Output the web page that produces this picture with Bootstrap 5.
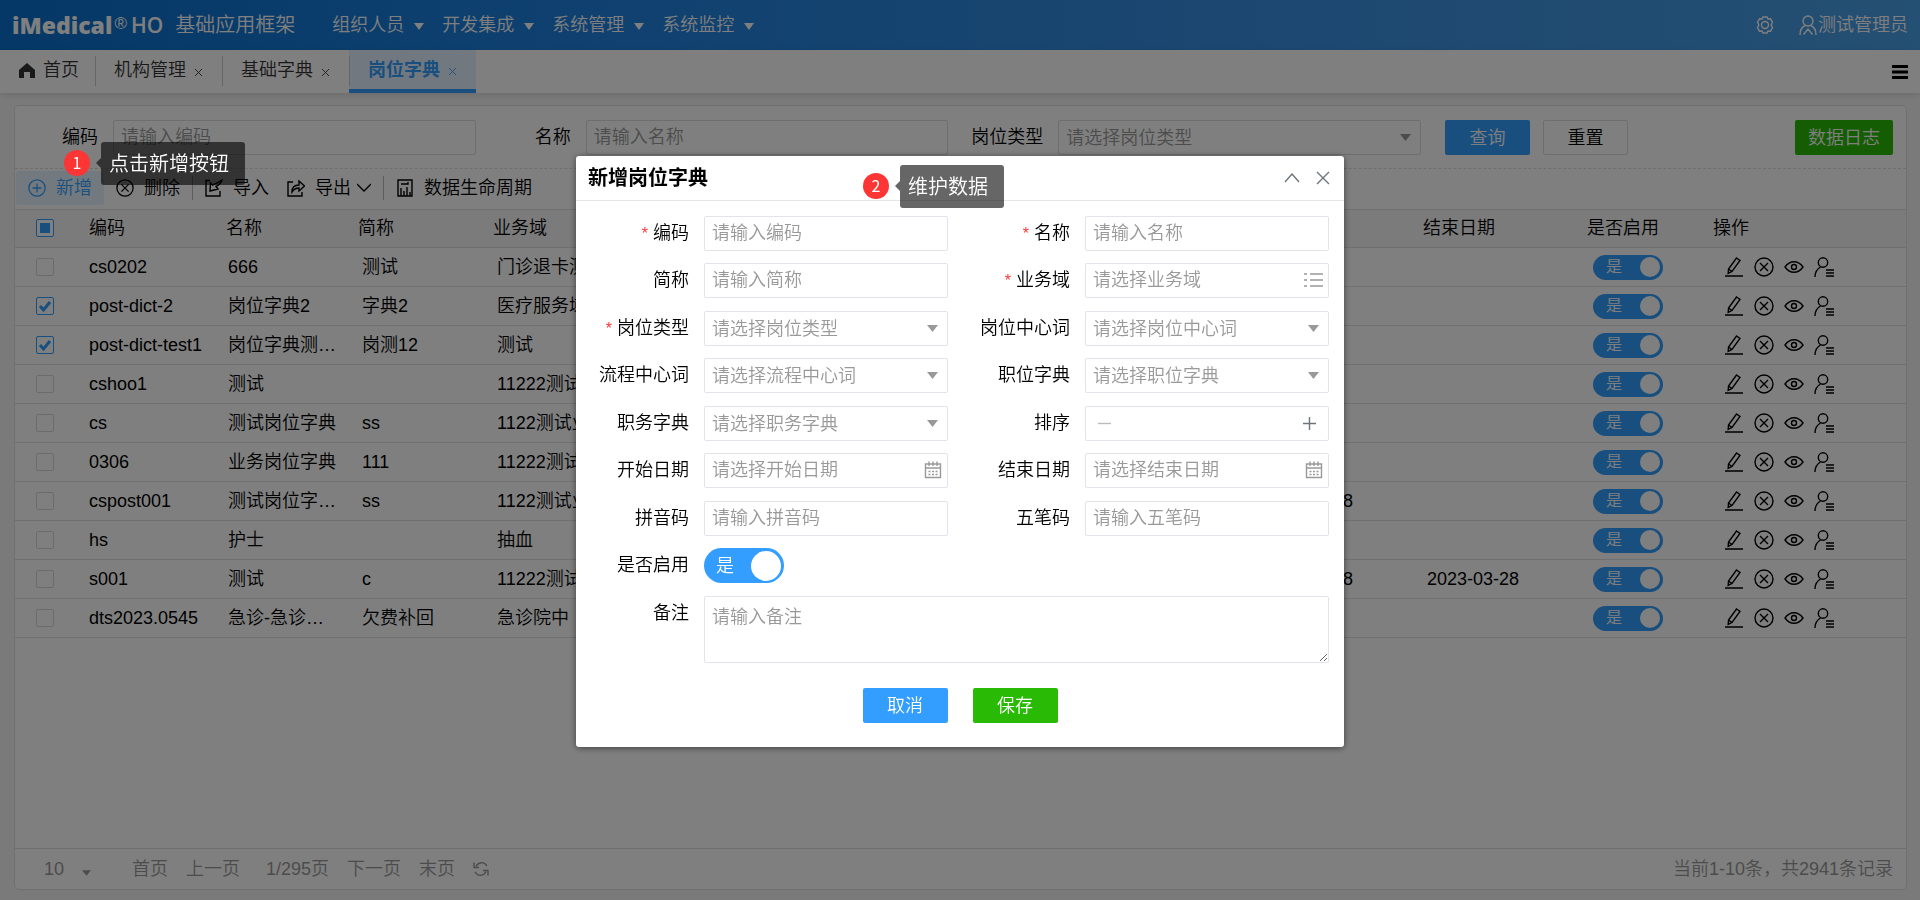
<!DOCTYPE html>
<html lang="zh-CN">
<head>
<meta charset="utf-8">
<meta name="viewport" content="width=device-width, initial-scale=1">
<title>基础应用框架 - 岗位字典</title>
<link href="https://cdn.jsdelivr.net/npm/bootstrap@5.3.0/dist/css/bootstrap.min.css" rel="stylesheet">
<style>
  :root { --blue: #339eff; --green: #28ba05; --line: #e0e0e0; --field: #e2e3eb; }
  body { font-family: "Liberation Sans", "Noto Sans CJK SC", sans-serif; font-size: 18px; font-weight: 350; line-height: 24px; color: #000; background: #f5f5f5; }
  svg { display: block; flex: none; fill: none; stroke: currentColor; stroke-width: 1.4; }
  a { color: inherit; text-decoration: none; }
  .ic { width: 20px; height: 20px; }
  .ic-sm { width: 18px; height: 18px; }

  .topbar { height: 50px; padding: 0 12px; color: #fff; background: linear-gradient(90deg, #0a70cc 0, #1b7fdf 25%, #3f93e2 75%, #49a0e6 100%); }
  .logo { font: 800 23px/24px "Open Sans", sans-serif; }
  .logo sup { font: 400 17px/12px "Liberation Sans", sans-serif; top: -5px; margin-left: 2px; }
  .logo-ho { font: 600 21px/24px "Open Sans", sans-serif; }
  .brand { font-size: 20px; }
  .topnav { gap: 38px; margin-left: 37px; }
  .menu-link { display: flex; align-items: center; width: 72px; white-space: nowrap; }
  .menu-link::after { content: ""; border: 5px solid transparent; border-top: 7px solid; border-bottom: 0; margin: 2px -20px 0 10px; }

  .tabbar { height: 43px; background: #fff; box-shadow: 0 2px 6px rgba(0,0,0,.12); color: #333; }
  .tab-item { display: flex; align-items: center; height: 43px; padding: 0 16px 3px 19px; position: relative; }
  .tab-item + .tab-item { padding-right: 20px; }
  .tab-item + .tab-item::before { content: ""; width: 1px; height: 30px; background: #ccc; position: absolute; left: 0; top: 6px; }
  .tab-item.on { background: #e3f1ff; color: var(--blue); font-weight: 700; border-bottom: 4px solid var(--blue); padding-bottom: 0; }
  .tab-x { width: 7px; height: 7px; margin: 4px 0 0 9px; padding: 0; border: 0; background: none; color: inherit; }
  .tab-x svg { width: 7px; height: 7px; stroke-width: 1; }
  .bars { stroke-width: 3; }

  .panel { margin: 12px 13px 10px 14px; background: #fff; border: 1px solid var(--line); border-radius: 5px; }
  .search { padding: 14px 13px 13px 0; border-bottom: 1px dashed #dcdcdc; }
  .criteria { display: grid; grid-template-columns: 83px minmax(0, 1fr) 95px minmax(0, 1fr) 95px minmax(0, 1fr); }
  .criteria .form-control, .criteria .form-select { width: auto; margin-left: 15px; border-color: #ddd; }
  .form-label { margin: 0; text-align: right; white-space: nowrap; line-height: 35px; }
  .form-control, .form-select { height: 35px; padding: 0 7px; font-size: 18px; font-weight: 350; line-height: 24px; border: 1px solid var(--field); border-radius: 2px; color: #999; background-color: #fff; }
  .form-control::placeholder { color: #999; opacity: 1; }
  .form-select { padding-right: 28px; background-image: url("data:image/svg+xml,%3Csvg xmlns='http://www.w3.org/2000/svg' viewBox='0 0 11 7'%3E%3Cpath d='M0 0h11L5.500 7z' fill='%23999'/%3E%3C/svg%3E"); background-size: 11px 7px; background-position: right 9px center; }
  .action { height: 35px; width: 85px; padding: 0; border-radius: 2px; font-size: 18px; font-weight: 350; line-height: 24px; color: #fff; border: 0; white-space: nowrap; }
  .act-blue, .act-blue:hover { background: var(--blue); color: #fff; }
  .act-green, .act-green:hover { background: var(--green); color: #fff; }
  .act-plain { background: #fff; color: #000; border: 1px solid #ddd; margin-left: 13px; }
  .act-wide { width: 98px; }
  .spacer { width: 167px; }

  .tools { height: 40px; padding: 0 1px 3px; }
  .tool { display: flex; align-items: center; gap: 10px; height: 34px; padding: 0 12px; border: 0; background: none; font-weight: 350; color: #000; white-space: nowrap; }
  .tool.lit { background: #e5f3ff; color: var(--blue); border-radius: 3px; }
  .tool-tight { padding-left: 6px; }
  .tool .chev { margin-left: -4px; }
  .rule { width: 1px; height: 24px; background: #bbb; }

  .grid { table-layout: fixed; margin: 0; border-top: 1px solid var(--line); }
  .grid th, .grid td { height: 39px; padding: 0 8px; vertical-align: middle; white-space: nowrap; font-weight: 350; color: #000; border-bottom: 1px solid var(--line); }
  .grid th { height: 38px; padding: 0 0 2px 4px; background: #f6f6f6; }
  .grid th:nth-child(2) { padding-left: 8px; }
  .grid th:nth-child(3) { padding-left: 6px; }
  .grid .pick { padding-left: 21px; }
  .grid td.mid { text-align: center; padding: 0; }
  .grid th.mid { padding-left: 10px; }
  .grid th.last { padding-left: 34px; }
  .grid td.ops { padding: 0 0 0 45px; }
  .tick { appearance: none; display: block; width: 18px; height: 18px; margin: 0; border: 1px solid #d8d8d8; border-radius: 2px; background: #fff center / 14px 14px no-repeat; }
  .tick:checked { border-color: var(--blue); background-image: url("data:image/svg+xml,%3Csvg xmlns='http://www.w3.org/2000/svg' viewBox='0 0 14 14'%3E%3Cpath d='M2 7l3.500 4L12 3' fill='none' stroke='%23339eff' stroke-width='3'/%3E%3C/svg%3E"); }
  .tick.some { border-color: var(--blue); background: linear-gradient(var(--blue), var(--blue)) center / 10px 10px no-repeat #fff; }
  .toggle { position: relative; display: inline-flex; align-items: center; vertical-align: middle; width: 70px; height: 25px; font-size: 16px; color: #fff; }
  .toggle input { appearance: none; width: 100%; height: 100%; margin: 0; border-radius: 18px; background: var(--blue); }
  .toggle span { position: absolute; left: 13px; }
  .toggle::after { content: ""; position: absolute; right: 3px; width: 20px; height: 20px; border-radius: 50%; background: #fff; }
  .toggle.big { width: 80px; height: 35px; font-size: 18px; }
  .toggle.big::after { width: 30px; height: 30px; }
  .toggle.big span { left: 12px; }
  .op { padding: 0; border: 0; background: none; color: #000; }
  .op-list { gap: 10px; }

  .pager { height: 41px; padding: 0 13px 0 29px; border-top: 1px solid var(--line); color: #999; white-space: nowrap; }
  .pager .size { width: 56px; height: 24px; border: 0; padding: 0; margin-right: 32px; font-weight: 350; color: inherit; background-position: right 9px bottom 5px; background-size: 9px 6px; }
  .pages { gap: 18px; }

  .mask { background: rgba(0,0,0,.5); padding-top: 3px; }
  .dialog-box { width: 768px; max-width: 100%; background: #fff; border-radius: 3px; box-shadow: 0 1px 6px rgba(0,0,0,.5); }
  .dialog-head { height: 45px; padding: 0 14px 1px 12px; border-bottom: 1px solid #e6e6e6; font-size: 20px; position: relative; }
  .dialog-head b { font-weight: 700; }
  .fields { display: grid; grid-template-columns: 98px minmax(0, 1fr) 107px minmax(0, 1fr); grid-auto-rows: 35px 36px; gap: 12px 15px; padding: 15px 15px 0; align-items: start; }
  .need::before { content: "*"; color: #f33; font-size: 16px; margin-right: 5px; line-height: 16px; }
  .with-icon { position: relative; }
  .with-icon > svg { position: absolute; top: 8px; right: 6px; color: #999; }
  .stepper input { min-width: 0; height: 24px; }
  .stepper .less { color: #bbb; }
  .note-row { grid-column: 2 / -1; height: 67px; }
  .note-row.form-control { padding: 8px 7px; }
  .foot { padding: 57px 0 24px; gap: 25px; }

  .callout-dot { position: absolute; z-index: 1070; width: 26px; height: 26px; border-radius: 50%; background: #fd3535; color: #fff; font: 400 16px/25px "Noto Sans CJK SC", sans-serif; text-align: center; }
  .callout-tip { position: absolute; z-index: 1070; height: 43px; padding: 0 12px 0 8px; border-radius: 3px; background: rgba(0,0,0,.6); color: #fff; font-size: 20px; line-height: 44px; white-space: nowrap; }
  .callout-tip::before { content: ""; position: absolute; left: -5px; top: 16px; border: 5px solid transparent; border-left: 0; border-right-color: rgba(0,0,0,.6); }
  .step1 .callout-dot { left: 49px; top: -19px; }
  .step1 .callout-tip { left: 86px; top: -27px; }
  .step2 .callout-dot { left: 287px; top: 17px; }
  .step2 .callout-tip { left: 324px; top: 9px; }
</style>
</head>
<body class="min-vh-100 d-flex flex-column">

<svg class="d-none">
  <symbol id="i-edit" viewBox="0 0 20 20"><path d="M12.500 1l3.500 2.500-8 11-3.800 1.800.3-4.300zM4.500 12l3.500 2.500M1 19h18"/></symbol>
  <symbol id="i-del" viewBox="0 0 20 20"><circle cx="10" cy="10" r="9"/><path d="M6 6l8 8M14 6l-8 8"/></symbol>
  <symbol id="i-eye" viewBox="0 0 20 20"><path d="M1 10c5-7 13-7 18 0-5 7-13 7-18 0z"/><circle cx="10" cy="10" r="2.500"/></symbol>
  <symbol id="i-user" viewBox="0 0 20 20"><circle cx="9" cy="5.500" r="4.700"/><path d="M1 20c0-5 2-8 5.500-10M12 13h8M12 16h8M12 19h8"/></symbol>
  <symbol id="i-cal" viewBox="0 0 18 18"><path d="M1.500 3h15v13.500h-15zM1.500 7h15M5 .5V5M9 .5V5M13 .5V5"/><path d="M4.500 10.500h9M4.500 13.500h9" stroke-dasharray="2 1.500"/></symbol>
</svg>

<header class="topbar d-flex align-items-center">
  <div class="logo">iMedical<sup>®</sup></div>
  <div class="logo-ho ms-1">HO</div>
  <div class="brand ms-2 ps-1">基础应用框架</div>
  <nav class="topnav d-flex">
    <a class="menu-link" href="#">组织人员</a>
    <a class="menu-link" href="#">开发集成</a>
    <a class="menu-link" href="#">系统管理</a>
    <a class="menu-link" href="#">系统监控</a>
  </nav>
  <a class="ms-auto me-4" href="#" aria-label="设置"><svg class="ic-sm" viewBox="0 0 18 18"><path d="M7 1h4l1 2 2.500-.2 2 3.400L15.200 9l1.300 2.800-2 3.400L12 15l-1 2H7l-1-2-2.500.2-2-3.400L2.800 9 1.500 6.200l2-3.400L6 3z"/><circle cx="9" cy="9" r="3.500"/></svg></a>
  <a class="d-flex align-items-center" href="#"><svg class="ic" viewBox="0 0 20 20"><circle cx="10" cy="6" r="5"/><path d="M2 20c0-5 2-8 5-9.500M18 20c0-5-2-8-5-9.500M5.500 19.500L10 14l4.500 5.500"/></svg><span>测试管理员</span></a>
</header>

<nav class="tabbar d-flex">
  <a class="tab-item" href="#"><svg class="me-2" width="16" height="15" viewBox="0 0 16 15"><path d="M8 0l8 7v8h-5V9H5v6H0V7z" fill="currentColor" stroke="none"/></svg>首页</a>
  <div class="tab-item"><a href="#">机构管理</a><button class="tab-x" aria-label="关闭"><svg viewBox="0 0 8 8"><path d="M0 0l8 8M8 0L0 8"/></svg></button></div>
  <div class="tab-item"><a href="#">基础字典</a><button class="tab-x" aria-label="关闭"><svg viewBox="0 0 8 8"><path d="M0 0l8 8M8 0L0 8"/></svg></button></div>
  <div class="tab-item on"><a href="#">岗位字典</a><button class="tab-x" aria-label="关闭"><svg viewBox="0 0 8 8"><path d="M0 0l8 8M8 0L0 8"/></svg></button></div>
  <button class="op ms-auto me-2 px-1" aria-label="菜单"><svg class="bars" width="16" height="14" viewBox="0 0 16 14"><path d="M0 1.500h16M0 7h16M0 12.500h16"/></svg></button>
</nav>

<main class="panel flex-grow-1 d-flex flex-column">
  <form class="search d-flex">
    <div class="criteria flex-grow-1">
      <label class="form-label" for="q1">编码</label><input class="form-control" id="q1" placeholder="请输入编码">
      <label class="form-label" for="q2">名称</label><input class="form-control" id="q2" placeholder="请输入名称">
      <label class="form-label" for="q3">岗位类型</label><select class="form-select" id="q3"><option>请选择岗位类型</option></select>
    </div>
    <button type="button" class="btn action act-blue ms-4">查询</button>
    <button type="button" class="btn action act-plain">重置</button>
    <div class="spacer"></div>
    <button type="button" class="btn action act-green act-wide">数据日志</button>
  </form>

  <div class="tools d-flex align-items-center position-relative">
    <button class="tool lit"><svg class="ic-sm" viewBox="0 0 20 20"><circle cx="10" cy="10" r="9"/><path d="M10 5v10M5 10h10"/></svg>新增</button>
    <button class="tool"><svg class="ic-sm"><use href="#i-del"/></svg>删除</button>
    <div class="rule"></div>
    <button class="tool"><svg class="ic-sm" viewBox="0 0 18 18"><path d="M5 1.500H1V17h14v-5"/><path d="M17 1c-1 3-3 5-6 6.500l2 2.500L5 12l.5-8 2 2c3-1 6-2.500 9.500-5z"/></svg>导入</button>
    <button class="tool tool-tight"><svg class="ic-sm" viewBox="0 0 18 18"><path d="M6 3H1v14h14v-4"/><path d="M5 13c0-5 3-7 7-7V2l5.500 5L12 12V9c-3 0-5 1-7 4z"/></svg><span>导出</span><svg class="chev" width="14" height="9" viewBox="0 0 14 9"><path d="M0 1l7 7 7-7"/></svg></button>
    <div class="rule"></div>
    <button class="tool"><svg width="18" height="18" viewBox="0 0 18 18"><path d="M2 1h14v16H2zM5 17V9M8 17v-5M11 17V8M14 17v-4M5 5h7V3"/></svg>数据生命周期</button>
    <div class="step1"><span class="callout-dot">1</span><span class="callout-tip pe-3">点击新增按钮</span></div>
  </div>

  <table class="table grid">
    <colgroup><col style="width:66px"><col style="width:139px"><col style="width:134px"><col style="width:135px"><col style="width:166px"><col><col style="width:166px"><col style="width:158px"><col style="width:102px"><col style="width:227px"></colgroup>
    <thead><tr><th class="pick"><input class="tick some" type="checkbox" aria-label="全选"></th><th>编码</th><th>名称</th><th>简称</th><th>业务域</th><th></th><th>开始日期</th><th>结束日期</th><th class="mid">是否启用</th><th class="last">操作</th></tr></thead>
    <tbody id="rows"></tbody>
  </table>

  <div class="pager d-flex align-items-center mt-auto">
    <select class="form-select size" aria-label="每页条数"><option>10</option></select>
    <div class="pages d-flex align-items-center">
      <a href="#">首页</a><a href="#">上一页</a>
      <span class="ps-2">1/295页</span>
      <a href="#">下一页</a><a href="#">末页</a>
      <a href="#" aria-label="刷新"><svg width="16" height="16" viewBox="0 0 16 16"><path d="M3 5.500C5 1 11 0 14 5M13 10.500C11 15 5 16 2 11"/><path d="M1 1.500v5h5M15 14.500v-5h-5"/></svg></a>
    </div>
    <span class="ms-auto">当前1-10条，共2941条记录</span>
  </div>
</main>

<div class="modal show d-flex align-items-center justify-content-center mask" role="dialog" aria-labelledby="dlg-title">
  <form class="dialog-box">
    <div class="dialog-head d-flex align-items-center">
      <b id="dlg-title">新增岗位字典</b>
      <button type="button" class="op ms-auto text-secondary" aria-label="收起"><svg width="16" height="10" viewBox="0 0 16 10"><path d="M1 9l7-8 7 8"/></svg></button>
      <button type="button" class="op ms-3 text-secondary" aria-label="关闭"><svg width="14" height="14" viewBox="0 0 14 14"><path d="M1 1l12 12M13 1L1 13"/></svg></button>
      <div class="step2"><span class="callout-dot">2</span><span class="callout-tip pe-3">维护数据</span></div>
    </div>
    <div class="fields">
      <label class="form-label need" for="f1">编码</label><input class="form-control" id="f1" placeholder="请输入编码">
      <label class="form-label need" for="f2">名称</label><input class="form-control" id="f2" placeholder="请输入名称">
      <label class="form-label" for="f3">简称</label><input class="form-control" id="f3" placeholder="请输入简称">
      <label class="form-label need" for="f4">业务域</label><div class="with-icon"><input class="form-control" id="f4" placeholder="请选择业务域"><svg width="19" height="18" viewBox="0 0 19 18"><path d="M6 3h13M6 9h13M6 15h13M0 3h3M0 9h3M0 15h3"/></svg></div>
      <label class="form-label need" for="f5">岗位类型</label><select class="form-select" id="f5"><option>请选择岗位类型</option></select>
      <label class="form-label" for="f6">岗位中心词</label><select class="form-select" id="f6"><option>请选择岗位中心词</option></select>
      <label class="form-label" for="f7">流程中心词</label><select class="form-select" id="f7"><option>请选择流程中心词</option></select>
      <label class="form-label" for="f8">职位字典</label><select class="form-select" id="f8"><option>请选择职位字典</option></select>
      <label class="form-label" for="f9">职务字典</label><select class="form-select" id="f9"><option>请选择职务字典</option></select>
      <label class="form-label" for="f10">排序</label>
      <div class="form-control stepper d-flex align-items-center px-2">
        <button type="button" class="op less ps-1" aria-label="减"><svg width="13" height="13" viewBox="0 0 13 13"><path d="M0 6.500h13"/></svg></button>
        <input class="border-0 flex-fill" id="f10">
        <button type="button" class="op pe-1 text-secondary" aria-label="加"><svg width="13" height="13" viewBox="0 0 13 13"><path d="M0 6.500h13M6.500 0v13"/></svg></button>
      </div>
      <label class="form-label" for="f11">开始日期</label><div class="with-icon"><input class="form-control" id="f11" placeholder="请选择开始日期"><svg class="ic-sm"><use href="#i-cal"/></svg></div>
      <label class="form-label" for="f12">结束日期</label><div class="with-icon"><input class="form-control" id="f12" placeholder="请选择结束日期"><svg class="ic-sm"><use href="#i-cal"/></svg></div>
      <label class="form-label" for="f13">拼音码</label><input class="form-control" id="f13" placeholder="请输入拼音码">
      <label class="form-label" for="f14">五笔码</label><input class="form-control" id="f14" placeholder="请输入五笔码">
      <label class="form-label" for="f15">是否启用</label><div class="toggle big"><input type="checkbox" id="f15" checked><span>是</span></div><i></i><i></i>
      <label class="form-label" for="f16">备注</label><textarea class="form-control note-row" id="f16" placeholder="请输入备注"></textarea>
    </div>
    <div class="foot d-flex justify-content-center">
      <button type="button" class="btn action act-blue">取消</button>
      <button type="button" class="btn action act-green">保存</button>
    </div>
  </form>
</div>

<script src="https://cdn.jsdelivr.net/npm/bootstrap@5.3.0/dist/js/bootstrap.bundle.min.js"></script>
<script>
  // checked, code, name, short name, domain, start date, end date
  const posts = [
    [0, 'cs0202', '666', '测试', '门诊退卡测试', '', ''],
    [1, 'post-dict-2', '岗位字典2', '字典2', '医疗服务域', '', ''],
    [1, 'post-dict-test1', '岗位字典测…', '岗测12', '测试', '', ''],
    [0, 'cshoo1', '测试', '', '11222测试', '', ''],
    [0, 'cs', '测试岗位字典', 'ss', '1122测试业务', '', ''],
    [0, '0306', '业务岗位字典', '111', '11222测试', '', ''],
    [0, 'cspost001', '测试岗位字…', 'ss', '1122测试业务', '2023-03-28', ''],
    [0, 'hs', '护士', '', '抽血', '', ''],
    [0, 's001', '测试', 'c', '11222测试', '2023-03-28', '2023-03-28'],
    [0, 'dts2023.0545', '急诊-急诊…', '欠费补回', '急诊院中', '', '']
  ];
  const ops = [['edit', '编辑'], ['del', '删除'], ['eye', '查看'], ['user', '人员']]
    .map(([id, name]) => `<button class="op" aria-label="${name}"><svg class="ic"><use href="#i-${id}"/></svg></button>`).join('');
  document.getElementById('rows').innerHTML = posts.map(([on, code, name, abbr, area, from, to]) => `<tr>
    <td class="pick"><input class="tick" type="checkbox" aria-label="${code}"${on ? ' checked' : ''}></td>
    <td>${code}</td><td>${name}</td><td>${abbr}</td><td>${area}</td><td></td><td>${from}</td><td>${to}</td>
    <td class="mid"><label class="toggle"><input type="checkbox" checked><span>是</span></label></td>
    <td class="ops"><div class="op-list d-flex">${ops}</div></td></tr>`).join('');
</script>
</body>
</html>
